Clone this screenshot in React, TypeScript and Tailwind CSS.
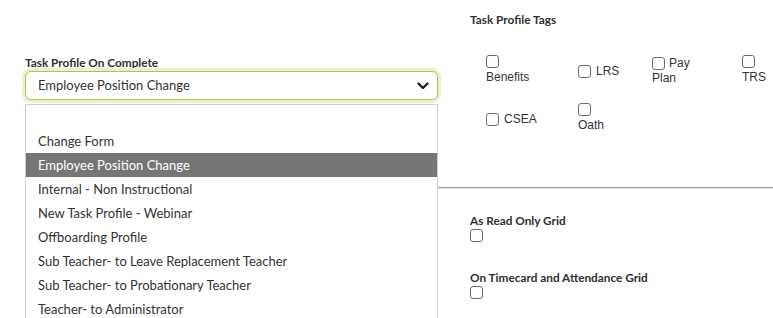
const options = [
  "",
  "Change Form",
  "Employee Position Change",
  "Internal - Non Instructional",
  "New Task Profile - Webinar",
  "Offboarding Profile",
  "Sub Teacher- to Leave Replacement Teacher",
  "Sub Teacher- to Probationary Teacher",
  "Teacher- to Administrator",
];

const selected = "Employee Position Change";

function Box() {
  return (
    <span className="block w-[13px] h-[13px] shrink-0 rounded-[3px] border border-[#6b6b6b] bg-white" />
  );
}

function Label({ children }: { children: React.ReactNode }) {
  return (
    <div className="text-[11.8px] leading-[16px] font-bold text-[#2f2f2f] font-['Lato',sans-serif]">
      {children}
    </div>
  );
}

export default function App() {
  return (
    <div className="relative w-[773px] h-[318px] overflow-hidden bg-white font-['Lato',sans-serif] text-[#333]">
      <div className="flex h-[187px]">
        {/* left: on complete select */}
        <div className="w-[470px] pl-[25px] pr-[32px] pt-[55px]">
          <Label>Task Profile On Complete</Label>
          <div className="relative">
            <div className="flex items-center justify-between h-[29px] rounded-[6px] border border-[#a9c64a] shadow-[0_0_0_3px_#eaf2d3] pl-[12px] pr-[6px] bg-white">
              <span className="text-[13px] text-[#333] pt-[1px]">{selected}</span>
              <svg width="12" height="8" viewBox="0 0 12 8" className="mr-[2px]">
                <path d="M1.5 1.5 L6 6 L10.5 1.5" fill="none" stroke="#222" strokeWidth="2.4" strokeLinecap="round" strokeLinejoin="round" />
              </svg>
            </div>
            {/* open list */}
            <div className="absolute left-0 right-0 top-[33px] z-10 border border-[#cfcfcf] bg-white">
              {options.map((o, i) => (
                <div
                  key={i}
                  className={
                    o === selected
                      ? "h-[24px] pl-[12px] pt-[2px] flex items-center text-[13px] bg-[#767676] text-white"
                      : "h-[24px] pl-[12px] pt-[2px] flex items-center text-[13px] text-[#333]"
                  }
                >
                  {o}
                </div>
              ))}
            </div>
          </div>
        </div>

        {/* right: tags */}
        <div className="flex-1 pt-[12px]">
          <Label>Task Profile Tags</Label>
          <div className="pl-[16px] pt-[27px] font-['Liberation_Sans',Arial,sans-serif] text-[12px] leading-[14px] text-[#333]">
            <div className="flex h-[48px] items-start">
              <div className="w-[92px]">
                <Box />
                <div className="mt-[2px]">Benefits</div>
              </div>
              <div className="w-[74px] mt-[9px] flex items-center gap-[5px]">
                <Box />
                <span>LRS</span>
              </div>
              <div className="w-[90px] mt-[1px]">
                <div className="flex items-center gap-[4px]">
                  <Box />
                  <span>Pay</span>
                </div>
                <div className="mt-[1px]">Plan</div>
              </div>
              <div>
                <Box />
                <div className="mt-[2px]">TRS</div>
              </div>
            </div>
            <div className="flex items-start">
              <div className="w-[92px] mt-[9px] flex items-center gap-[5px]">
                <Box />
                <span>CSEA</span>
              </div>
              <div>
                <Box />
                <div className="mt-[2px]">Oath</div>
              </div>
            </div>
          </div>
        </div>
      </div>

      <div className="ml-[25px] border-t border-[#9a9a9a] border-b-[#e6e6e6] border-b" />

      <div className="pl-[470px] pt-[24px]">
        <Label>As Read Only Grid</Label>
        <Box />
        <div className="h-[28px]" />
        <Label>On Timecard and Attendance Grid</Label>
        <Box />
      </div>
    </div>
  );
}
